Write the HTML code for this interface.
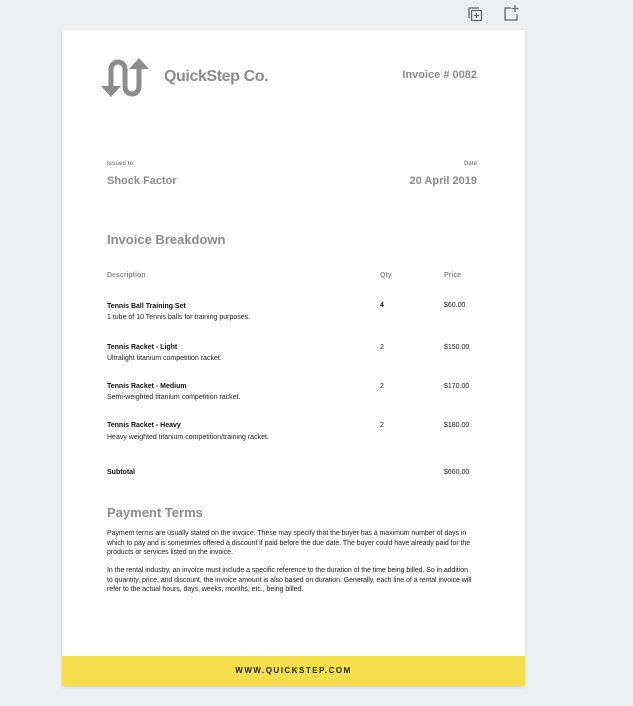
<!DOCTYPE html>
<html><head><meta charset="utf-8"><style>
*{margin:0;padding:0;box-sizing:border-box}
body{width:633px;height:706px;background:#edf0f2;position:relative;overflow:hidden;font-family:"Liberation Sans",sans-serif}
.pg{position:absolute;left:62px;top:30px;width:463px;height:656px;background:#fff;box-shadow:0 1px 3px rgba(0,0,0,.15)}
.a{position:absolute;white-space:nowrap}
.g{color:#8c8c8c;font-weight:bold}
.b{color:#111;font-weight:bold;font-size:7px}
.s{color:#222;font-size:7px}
.foot{position:absolute;left:0;top:626px;width:463px;height:30px;background:#f5df4d;text-align:center;line-height:30px;font-size:8px;font-weight:bold;letter-spacing:1.5px;color:#222}
p.a{font-size:7px;color:#222;line-height:9.5px;width:368px;white-space:normal;letter-spacing:-0.05px}
</style></head><body>
<svg class="a" style="left:466px;top:5px" width="18" height="18" viewBox="0 0 18 18" fill="none" stroke="#666" stroke-width="1.3"><path d="M3 13V3h10"/><rect x="5.5" y="5.5" width="10" height="10" rx="1"/><path d="M10.5 8v5M8 10.5h5"/></svg>
<svg class="a" style="left:502px;top:4px" width="18" height="18" viewBox="0 0 18 18" fill="none" stroke="#666" stroke-width="1.3"><path d="M9 4H3v12h12v-6"/><path d="M13 1v7M9.5 4.5h7"/></svg>
<div class="pg">
<svg class="a" style="left:38px;top:27px" width="52" height="42" viewBox="0 0 52 42" fill="none" stroke="#8c8c8c" stroke-width="5"><path d="M11 30V12a7 7 0 0 1 14 0v18a7 7 0 0 0 14 0V8"/><path d="M1 29h20l-10 11z" fill="#8c8c8c" stroke="none"/><path d="M29 12h20L39 1z" fill="#8c8c8c" stroke="none"/></svg>
<div class="a g" style="left:102px;top:38px;font-size:16px;letter-spacing:-0.4px">QuickStep Co.</div>
<div class="a g" style="right:48px;top:39px;font-size:11px">Invoice # 0082</div>
<div class="a g" style="left:45px;top:131px;font-size:6px">Issued to</div>
<div class="a g" style="right:48px;top:131px;font-size:6px">Date</div>
<div class="a g" style="left:45px;top:145px;font-size:11px">Shock Factor</div>
<div class="a g" style="right:48px;top:145px;font-size:11px">20 April 2019</div>
<div class="a g" style="left:45px;top:202px;font-size:13px">Invoice Breakdown</div>
<div class="a g" style="left:45px;top:242px;font-size:7px">Description</div>
<div class="a g" style="left:318px;top:242px;font-size:7px">Qty</div>
<div class="a g" style="left:382px;top:242px;font-size:7px">Price</div>

<div class="a b" style="left:45px;top:273px">Tennis Ball Training Set</div>
<div class="a s" style="left:45px;top:284px">1 tube of 10 Tennis balls for training purposes.</div>
<div class="a b" style="left:318px;top:272px">4</div><div class="a s" style="left:382px;top:272px">$60.00</div>

<div class="a b" style="left:45px;top:314px">Tennis Racket - Light</div>
<div class="a s" style="left:45px;top:325px">Ultralight titanium competition racket.</div>
<div class="a s" style="left:318px;top:314px">2</div><div class="a s" style="left:382px;top:314px">$150.00</div>

<div class="a b" style="left:45px;top:353px">Tennis Racket - Medium</div>
<div class="a s" style="left:45px;top:364px">Semi-weighted titanium competition racket.</div>
<div class="a s" style="left:318px;top:353px">2</div><div class="a s" style="left:382px;top:353px">$170.00</div>

<div class="a b" style="left:45px;top:392px">Tennis Racket - Heavy</div>
<div class="a s" style="left:45px;top:404px">Heavy weighted titanium competition/training racket.</div>
<div class="a s" style="left:318px;top:392px">2</div><div class="a s" style="left:382px;top:392px">$180.00</div>

<div class="a b" style="left:45px;top:439px">Subtotal</div>
<div class="a s" style="left:382px;top:439px">$660.00</div>

<div class="a g" style="left:45px;top:475px;font-size:13px">Payment Terms</div>
<p class="a" style="left:45px;top:499px">Payment terms are usually stated on the invoice. These may specify that the buyer has a maximum number of days in which to pay and is sometimes offered a discount if paid before the due date. The buyer could have already paid for the products or services listed on the invoice.</p>
<p class="a" style="left:45px;top:536px">In the rental industry, an invoice must include a specific reference to the duration of the time being billed. So in addition to quantity, price, and discount, the invoice amount is also based on duration. Generally, each line of a rental invoice will refer to the actual hours, days, weeks, months, etc., being billed.</p>
<div class="foot">WWW.QUICKSTEP.COM</div>
</div>
</body></html>
